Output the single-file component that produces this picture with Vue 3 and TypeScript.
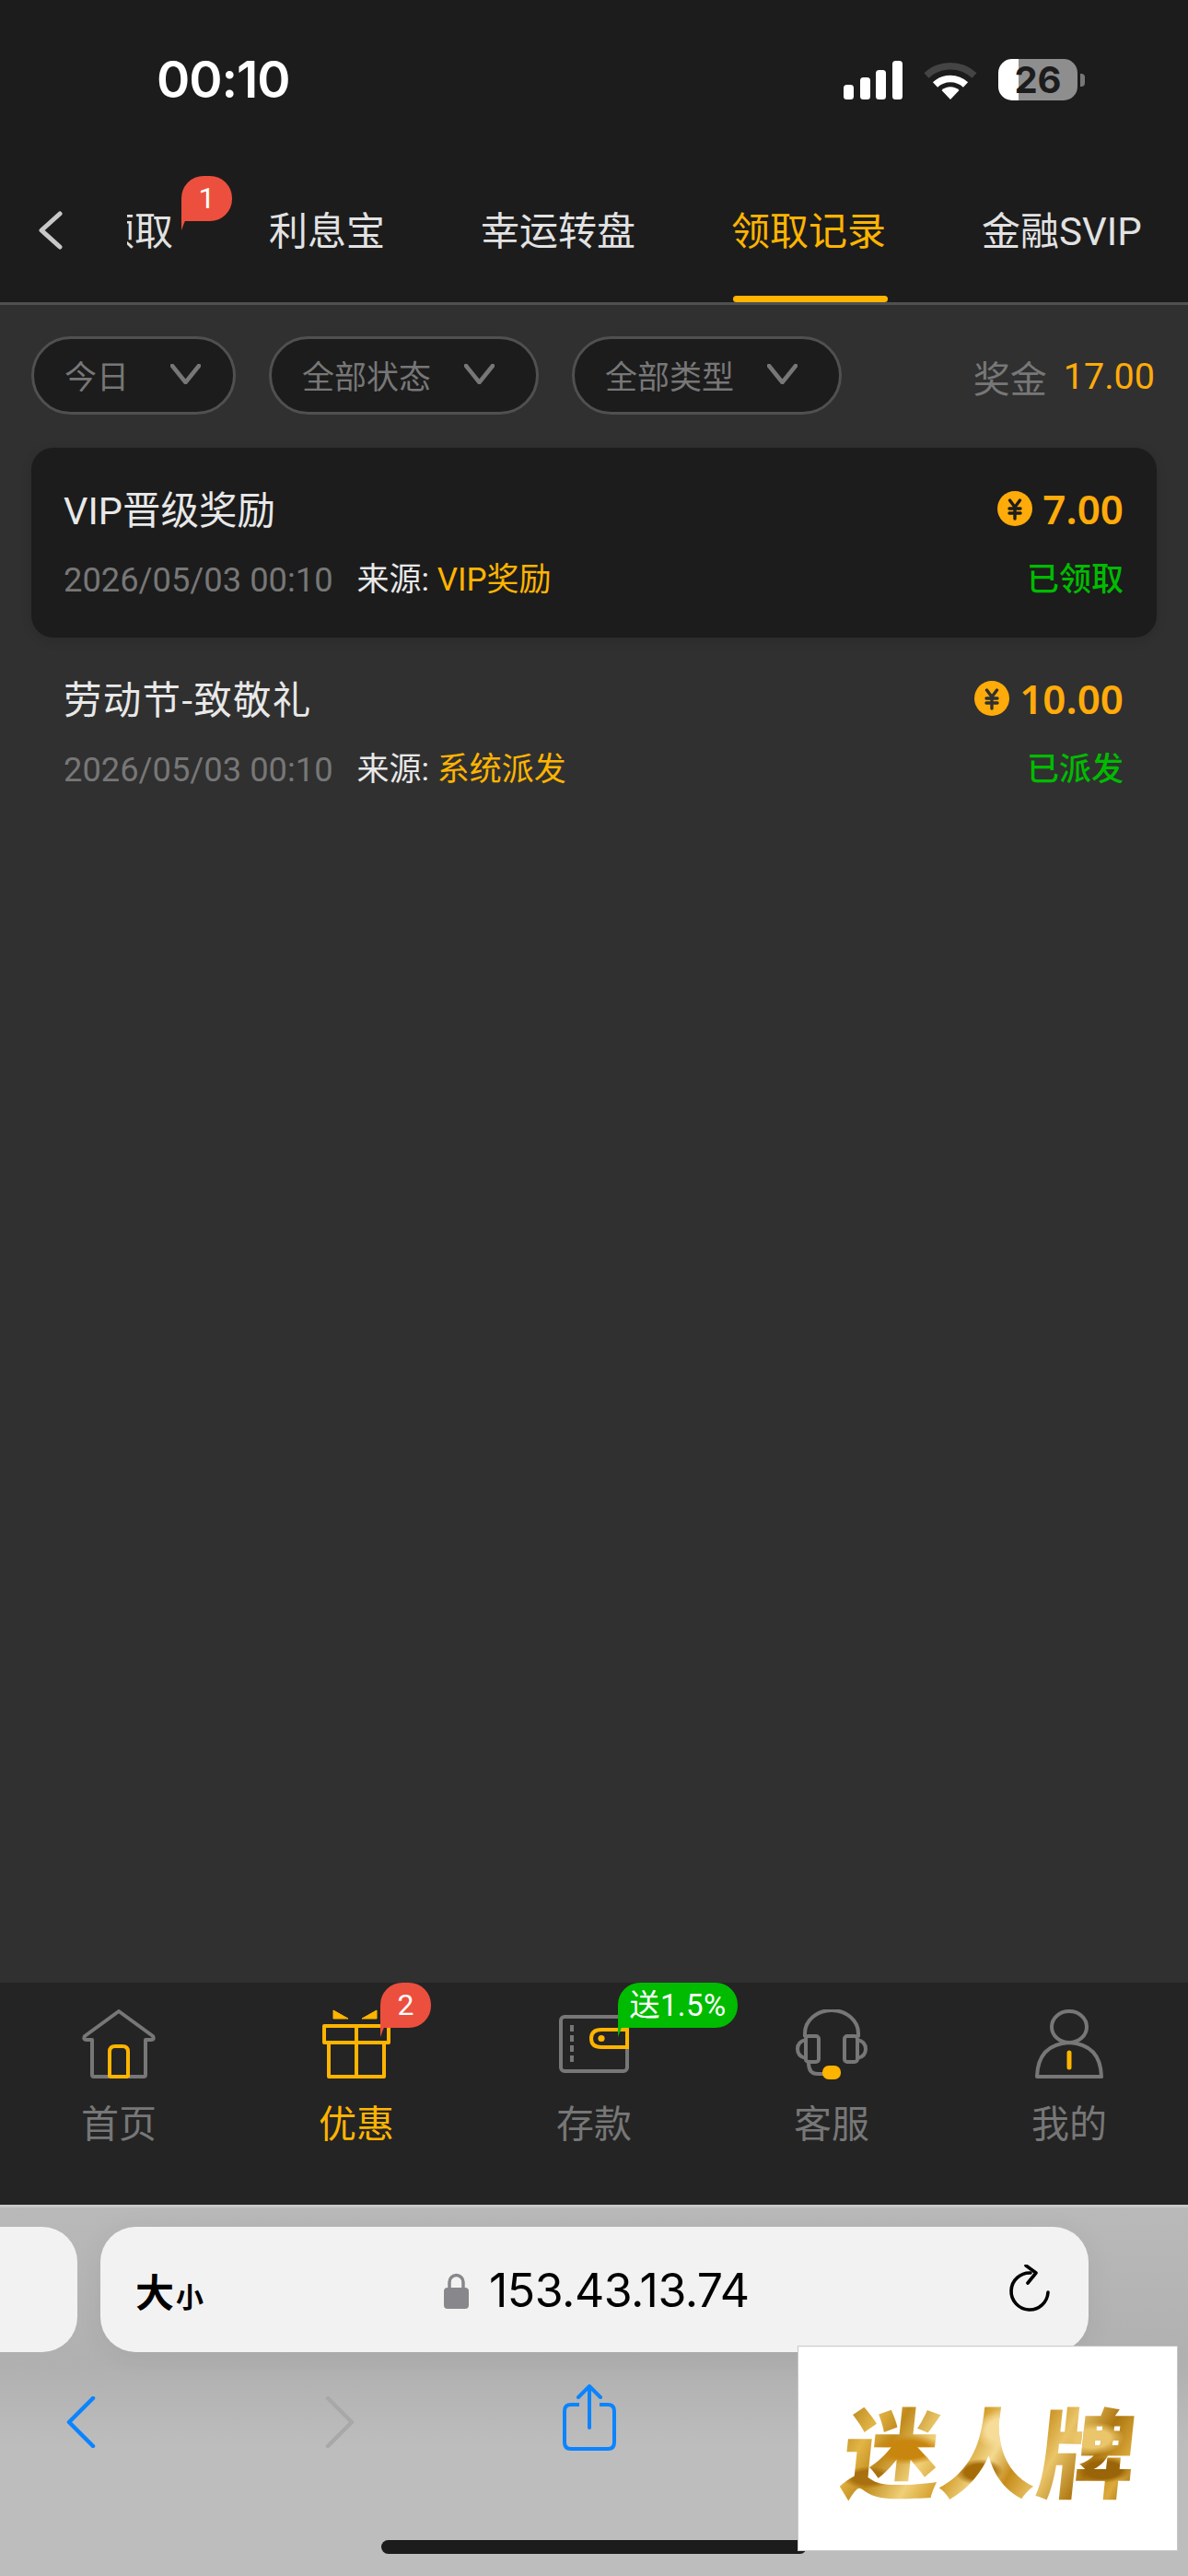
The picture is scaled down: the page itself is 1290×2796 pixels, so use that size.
<script setup lang="ts">
const tabs = [
  { label: '领取', badge: '1' },
  { label: '利息宝' },
  { label: '幸运转盘' },
  { label: '领取记录', active: true },
  { label: '金融SVIP' },
]
const filters = ['今日', '全部状态', '全部类型']
const records = [
  { title: 'VIP晋级奖励', amount: '7.00', time: '2026/05/03 00:10', source: 'VIP奖励', status: '已领取', card: true },
  { title: '劳动节-致敬礼', amount: '10.00', time: '2026/05/03 00:10', source: '系统派发', status: '已派发', card: false },
]
</script>

<template>
  <div class="phone">
    <header class="head">
      <div class="status">
        <span class="clock">00:10</span>
        <div class="sys">
          <svg class="signal" width="64" height="42" viewBox="0 0 64 42">
            <rect x="0" y="26" width="11" height="16" rx="3.5" fill="#fff" />
            <rect x="18" y="18" width="11" height="24" rx="3.5" fill="#fff" />
            <rect x="35" y="10" width="11" height="32" rx="3.5" fill="#fff" />
            <rect x="53" y="0" width="11" height="42" rx="3.5" fill="#fff" />
          </svg>
          <svg class="wifi" width="58" height="43" viewBox="0 0 58 43">
            <path d="M3 17 A38 38 0 0 1 55 17" fill="none" stroke="#444" stroke-width="7.5" />
            <path d="M12.5 27 A24 24 0 0 1 45.5 27" fill="none" stroke="#fff" stroke-width="7.5" />
            <path d="M29 43 L19.5 33 A14 14 0 0 1 38.5 33 Z" fill="#fff" />
          </svg>
          <div class="batt">
            <div class="batt-body"><span class="batt-num">26</span></div>
            <div class="batt-cap"></div>
          </div>
        </div>
      </div>
      <nav class="tabbar-top">
        <svg class="back" width="26" height="42" viewBox="0 0 26 42">
          <path d="M23 3 L3 21 L23 39" fill="none" stroke="#c8c8c8" stroke-width="5" stroke-linecap="round" stroke-linejoin="round" />
        </svg>
        <div class="tab-clip">
          <div class="tab-strip">
            <div v-for="t in tabs" :key="t.label" class="tab" :class="{ on: t.active }">
              {{ t.label }}
              <span v-if="t.badge" class="bubble red tab-bubble">{{ t.badge }}</span>
              <i v-if="t.active" class="bar"></i>
            </div>
          </div>
        </div>
      </nav>
    </header>

    <main class="body">
      <div class="filters">
        <div v-for="f in filters" :key="f" class="pill">
          <span>{{ f }}</span>
          <svg width="33" height="22" viewBox="0 0 33 22">
            <path d="M2 2 L16.5 20 L31 2" fill="none" stroke="#777" stroke-width="4.5" stroke-linecap="round" stroke-linejoin="round" />
          </svg>
        </div>
        <div class="sum"><span class="sum-k">奖金</span><span class="sum-v">17.00</span></div>
      </div>

      <div v-for="r in records" :key="r.title" class="rec" :class="{ card: r.card }">
        <div class="line">
          <span class="ttl">{{ r.title }}</span>
          <span class="amt">
            <svg class="coin" width="38" height="38" viewBox="0 0 38 38">
              <circle cx="19" cy="19" r="19" fill="#ffab0a" />
              <path d="M13.5 10 L19 17.5 L24.5 10 M13 19 H25 M13 24 H25 M19 18 V30" fill="none" :stroke="r.card ? '#1c1c1c' : '#303030'" stroke-width="3.4" stroke-linecap="round" />
            </svg>
            {{ r.amount }}
          </span>
        </div>
        <div class="line sub">
          <span class="meta">
            <span class="date">{{ r.time }}</span>
            <span class="src">来源: <b>{{ r.source }}</b></span>
          </span>
          <span class="st">{{ r.status }}</span>
        </div>
      </div>
    </main>

    <footer class="dock">
      <div class="item">
        <svg width="80" height="76" viewBox="0 0 80 76">
          <path d="M11 33 V71 Q11 73 13 73 H67 Q69 73 69 71 V33 H75 Q79 33 77 29 L40 2 L3 29 Q1 33 5 33 Z" fill="none" stroke="#777" stroke-width="4" stroke-linejoin="round" />
          <path d="M30 74 V46 Q30 40 36 40 H44 Q50 40 50 46 V74" fill="none" stroke="#ffb400" stroke-width="4" />
          <path d="M30 73 H50" stroke="#ffb400" stroke-width="4" />
        </svg>
        <span class="cap">首页</span>
      </div>
      <div class="item on">
        <svg width="76" height="76" viewBox="0 0 76 76">
          <path d="M13 1 L29 10 H13 Z M60 1 L44 10 H60 Z" fill="#ffb400" stroke="#ffb400" stroke-linejoin="round" />
          <rect x="3" y="18" width="70" height="18" fill="none" stroke="#ffb400" stroke-width="4" stroke-linejoin="round" />
          <path d="M8 36 V73 H68 V36 M38 18 V73" fill="none" stroke="#ffb400" stroke-width="4" stroke-linejoin="round" />
        </svg>
        <span class="bubble red dock-red">2</span>
        <span class="cap">优惠</span>
      </div>
      <div class="item">
        <svg width="78" height="76" viewBox="0 0 78 76">
          <rect x="3" y="8" width="72" height="59" rx="4" fill="none" stroke="#777" stroke-width="4" />
          <path d="M15 17 V57" fill="none" stroke="#777" stroke-width="4" stroke-dasharray="7 4" />
          <path d="M75 22 H47 Q36 22 36 31.5 Q36 41 47 41 H75 Z" fill="#242424" stroke="#ffb400" stroke-width="4" />
          <circle cx="47" cy="31.5" r="3.6" fill="#ffb400" />
        </svg>
        <span class="bubble green dock-green">送1.5%</span>
        <span class="cap">存款</span>
      </div>
      <div class="item">
        <svg width="78" height="76" viewBox="0 0 78 76">
          <path d="M10 30 V26 A29 25 0 0 1 68 26 V30" fill="none" stroke="#777" stroke-width="4" />
          <rect x="11" y="29" width="14" height="28" rx="3" fill="none" stroke="#777" stroke-width="4" />
          <rect x="53" y="29" width="14" height="28" rx="3" fill="none" stroke="#777" stroke-width="4" />
          <path d="M11 33 Q2 35 2 43 Q2 51 11 53 M67 33 Q76 35 76 43 Q76 51 67 53" fill="none" stroke="#777" stroke-width="4" />
          <path d="M14 58 Q14 70 24 70 H32" fill="none" stroke="#777" stroke-width="4" />
          <rect x="29" y="61" width="20" height="15" rx="7" fill="#ffb400" />
        </svg>
        <span class="cap">客服</span>
      </div>
      <div class="item">
        <svg width="74" height="76" viewBox="0 0 74 76">
          <ellipse cx="37" cy="19" rx="19" ry="17" fill="none" stroke="#777" stroke-width="4" />
          <path d="M2 73 Q3 38 37 36 Q71 38 72 73 Z" fill="none" stroke="#777" stroke-width="4" stroke-linejoin="round" />
          <path d="M37 47 V63" stroke="#ffb400" stroke-width="5" stroke-linecap="round" />
        </svg>
        <span class="cap">我的</span>
      </div>
    </footer>

    <section class="safari">
      <div class="url-row">
        <div class="peek"></div>
        <div class="url">
          <span class="aa"><b>大</b><small>小</small></span>
          <span class="addr">
            <svg width="27" height="39" viewBox="0 0 27 39">
              <path d="M6 17 V10 A7.5 7.5 0 0 1 21 10 V17" fill="none" stroke="#88888c" stroke-width="3.5" />
              <rect x="0" y="16" width="27" height="23" rx="4" fill="#88888c" />
            </svg>
            153.43.13.74
          </span>
          <svg width="46" height="54" viewBox="0 0 46 54">
            <path d="M25 9 A20 20 0 1 0 44 30" fill="none" stroke="#000" stroke-width="3.6" stroke-linecap="round" />
            <path d="M20 1 L31 9 L22 20" fill="none" stroke="#000" stroke-width="3.6" stroke-linecap="round" stroke-linejoin="round" />
          </svg>
        </div>
      </div>
      <div class="tools">
        <svg width="32" height="56" viewBox="0 0 32 56">
          <path d="M29 2 L3 28 L29 54" fill="none" stroke="#0a84ff" stroke-width="4.5" stroke-linecap="round" stroke-linejoin="round" />
        </svg>
        <svg width="32" height="56" viewBox="0 0 32 56">
          <path d="M3 2 L29 28 L3 54" fill="none" stroke="#a8a8a8" stroke-width="4.5" stroke-linecap="round" stroke-linejoin="round" />
        </svg>
        <svg width="58" height="74" viewBox="0 0 58 74">
          <path d="M18 22 H9 Q2 22 2 29 V63 Q2 70 9 70 H49 Q56 70 56 63 V29 Q56 22 49 22 H40" fill="none" stroke="#0a84ff" stroke-width="4" />
          <path d="M29 2 V47 M17 14 L29 2 L41 14" fill="none" stroke="#0a84ff" stroke-width="4" stroke-linecap="round" stroke-linejoin="round" />
        </svg>
      </div>
      <i class="home-ind"></i>
      <div class="logo"><span>迷人牌</span></div>
    </section>
  </div>
</template>

<style scoped>
.phone {
  width: 1290px;
  height: 2796px;
  display: flex;
  flex-direction: column;
  overflow: hidden;
  background: #303030;
  font-family: Roboto, "Noto Sans CJK SC", sans-serif;
}
.head {
  background: #1c1c1c;
  border-bottom: 3px solid #505050;
}
.status {
  height: 172px;
  display: flex;
  justify-content: space-between;
  padding: 64px 112px 0 170px;
  box-sizing: border-box;
}
.clock {
  font: 600 55px/45px Inter, sans-serif;
  color: #fff;
  letter-spacing: -1px;
}
.sys {
  display: flex;
  align-items: flex-start;
  gap: 23px;
}
.signal { margin-top: 2px; }
.wifi { margin-top: 1px; }
.batt {
  display: flex;
  align-items: center;
  gap: 3px;
}
.batt-body {
  width: 86px;
  height: 45px;
  border-radius: 15px;
  background: linear-gradient(90deg, #fff 25%, #8e8e8e 25%);
  display: flex;
  align-items: center;
  justify-content: center;
}
.batt-num {
  font: 700 40px/45px Inter, sans-serif;
  color: #1c1c1c;
}
.batt-cap {
  width: 5px;
  height: 14px;
  background: #777;
  border-radius: 0 4px 4px 0;
}
.tabbar-top {
  height: 156px;
  display: flex;
  align-items: center;
  padding-left: 42px;
}
.back { flex: none; }
.tab-clip {
  margin-left: 70px;
  flex: 1;
  height: 100%;
  overflow: hidden;
  position: relative;
}
.tab-strip {
  display: flex;
  margin-left: -34px;
  height: 100%;
}
.tab {
  flex: none;
  position: relative;
  padding: 0 52px 6px;
  box-sizing: border-box;
  display: flex;
  align-items: center;
  height: 100%;
  font-size: 42px;
  color: #e2e2e2;
  white-space: nowrap;
}
.tab:first-child { padding-left: 0; }
.tab.on { color: #ffb400; }
.bar {
  position: absolute;
  left: 54px;
  right: 50px;
  bottom: 0;
  height: 7px;
  background: #ffb400;
  border-radius: 4px;
}
.bubble {
  position: absolute;
  height: 49px;
  border-radius: 24px 24px 24px 0;
  color: #fff;
  display: flex;
  align-items: center;
  justify-content: center;
  box-sizing: border-box;
  font-size: 32px;
  line-height: 49px;
}
.bubble::after {
  content: "";
  position: absolute;
  left: 0;
  top: 30px;
  border-left: 11px solid;
  border-bottom: 29px solid transparent;
  border-left-color: inherit;
}
.red { background: #ec4f3d; border-color: #ec4f3d; width: 55px; }
.green { background: #00bb00; border-color: #00bb00; width: 130px; font-size: 33px; letter-spacing: 0.4px; }
.tab-bubble { left: 93px; top: 19px; }
.filters {
  display: flex;
  align-items: center;
  gap: 36px;
  padding: 34px 36px 0 34px;
  height: 85px;
}
.pill {
  height: 85px;
  box-sizing: border-box;
  border: 3px solid #505050;
  border-radius: 43px;
  background: #1c1c1c;
  display: flex;
  align-items: center;
  gap: 36px;
  padding: 0 45px 0 33px;
  color: #777;
  font-size: 35px;
}
.pill:first-child {
  gap: 45px;
  padding-right: 35px;
}
.pill span { margin-top: -2px; }
.pill svg { margin-top: -4px; }
.sum {
  margin-left: auto;
  margin-top: 2px;
  display: flex;
  align-items: center;
  gap: 18px;
}
.sum-k { font-size: 40px; color: #777; }
.sum-v { font-size: 39.5px; color: #ffab0a; }
.rec {
  margin: 0 34px;
  height: 206px;
  box-sizing: border-box;
  padding: 40px 36px 0 35px;
  border-radius: 24px;
}
.filters + .rec { margin-top: 36px; }
.card {
  background: #1c1c1c;
  box-shadow: 0 3px 12px rgba(0, 0, 0, 0.12);
}
.line {
  display: flex;
  justify-content: space-between;
  align-items: center;
  height: 52px;
}
.sub { margin-top: 26px; }
.ttl { font-size: 41.5px; line-height: 52px; margin-top: 5px; color: #e8e8e8; }
.rec:not(.card) .ttl { letter-spacing: 1.3px; }
.amt {
  display: flex;
  align-items: center;
  gap: 11px;
  font: 600 44px/52px "Noto Sans", sans-serif;
  color: #ffab0a;
}
.meta { display: flex; align-items: center; gap: 26px; line-height: 52px; }
.date { color: #777; font-size: 36.3px; }
.src { color: #e8e8e8; font-size: 35px; }
.src b { font-weight: 400; color: #ffb400; }
.st { font-size: 35px; line-height: 52px; color: #00bb00; font-weight: 500; }
.body { flex: 1; }
.dock {
  height: 241px;
  display: grid;
  grid-template-columns: repeat(5, 1fr);
  background: #242424;
  border-bottom: 3px solid #c8c8c8;
}
.item {
  position: relative;
  display: flex;
  flex-direction: column;
  align-items: center;
  padding-top: 29px;
}
.cap {
  margin-top: 21px;
  font-size: 41px;
  line-height: 56px;
  color: #777;
}
.item.on .cap { color: #ffb400; }
.dock-red { left: 155px; top: 0; }
.dock-green { left: 155px; top: 0; }
.safari {
  position: relative;
  flex: none;
  height: 400px;
  background: linear-gradient(180deg, #b9b9b9 0, #b0b0b0 170px, #bdbdbd 260px);
}
.url-row {
  display: flex;
  gap: 25px;
  margin-left: -120px;
  padding-top: 21px;
}
.peek, .url {
  height: 136px;
  background: #f2f2f2;
  border-radius: 38px;
  box-sizing: border-box;
}
.peek { width: 204px; flex: none; }
.url {
  width: 1073px;
  flex: none;
  position: relative;
  display: flex;
  align-items: center;
  justify-content: space-between;
  padding: 0 42px 0 38px;
  box-shadow: 0 4px 30px rgba(0, 0, 0, 0.06);
}
.aa { display: flex; align-items: baseline; color: #000; }
.aa b { font-size: 42px; font-weight: 700; }
.aa small { font-size: 30px; font-weight: 700; margin-left: 2px; }
.addr {
  position: absolute;
  left: 373px;
  top: 44px;
  display: flex;
  align-items: center;
  gap: 22px;
  font: 400 50px/50px Inter, sans-serif;
  letter-spacing: -0.5px;
  color: #000;
}
.tools {
  display: flex;
  align-items: flex-start;
  padding: 31px 0 0 72px;
  height: 100px;
}
.tools svg:nth-child(1) { margin-top: 17px; }
.tools svg:nth-child(2) { margin: 17px 0 0 249px; }
.tools svg:nth-child(3) { margin: 4px 0 0 226px; }
.home-ind {
  position: absolute;
  left: 414px;
  top: 361px;
  width: 462px;
  height: 15px;
  border-radius: 8px;
  background: #1c1c1c;
}
.logo {
  position: absolute;
  left: 866px;
  top: 150px;
  width: 413px;
  height: 223px;
  box-sizing: border-box;
  background: #fff;
  border: 1px solid #c8c8c8;
  display: flex;
  align-items: center;
  justify-content: center;
}
.logo span {
  font: 900 106px/120px "Noto Sans CJK SC", sans-serif;
  white-space: nowrap;
  transform: skewX(-6deg);
  margin: -2px 0 0 4px;
  background:
    radial-gradient(ellipse 40px 16px at 70px 62px, #c9860f 0 60%, transparent 100%),
    radial-gradient(ellipse 30px 22px at 170px 40px, #f6dc98 0 55%, transparent 100%),
    radial-gradient(ellipse 26px 14px at 150px 86px, #a66c08 0 60%, transparent 100%),
    radial-gradient(ellipse 34px 18px at 270px 50px, #eac569 0 55%, transparent 100%),
    radial-gradient(ellipse 30px 14px at 285px 84px, #9a6408 0 65%, transparent 100%),
    radial-gradient(ellipse 28px 12px at 30px 92px, #a97010 0 60%, transparent 100%),
    linear-gradient(115deg, #b07a14 0%, #e2b546 12%, #c08a1c 20%, #f0d078 32%, #d39c28 42%, #f3d98f 52%, #c68c1a 60%, #eac569 70%, #ad7610 82%, #dcaa3a 92%, #93620c 100%);
  -webkit-background-clip: text;
  background-clip: text;
  color: transparent;
}
</style>
